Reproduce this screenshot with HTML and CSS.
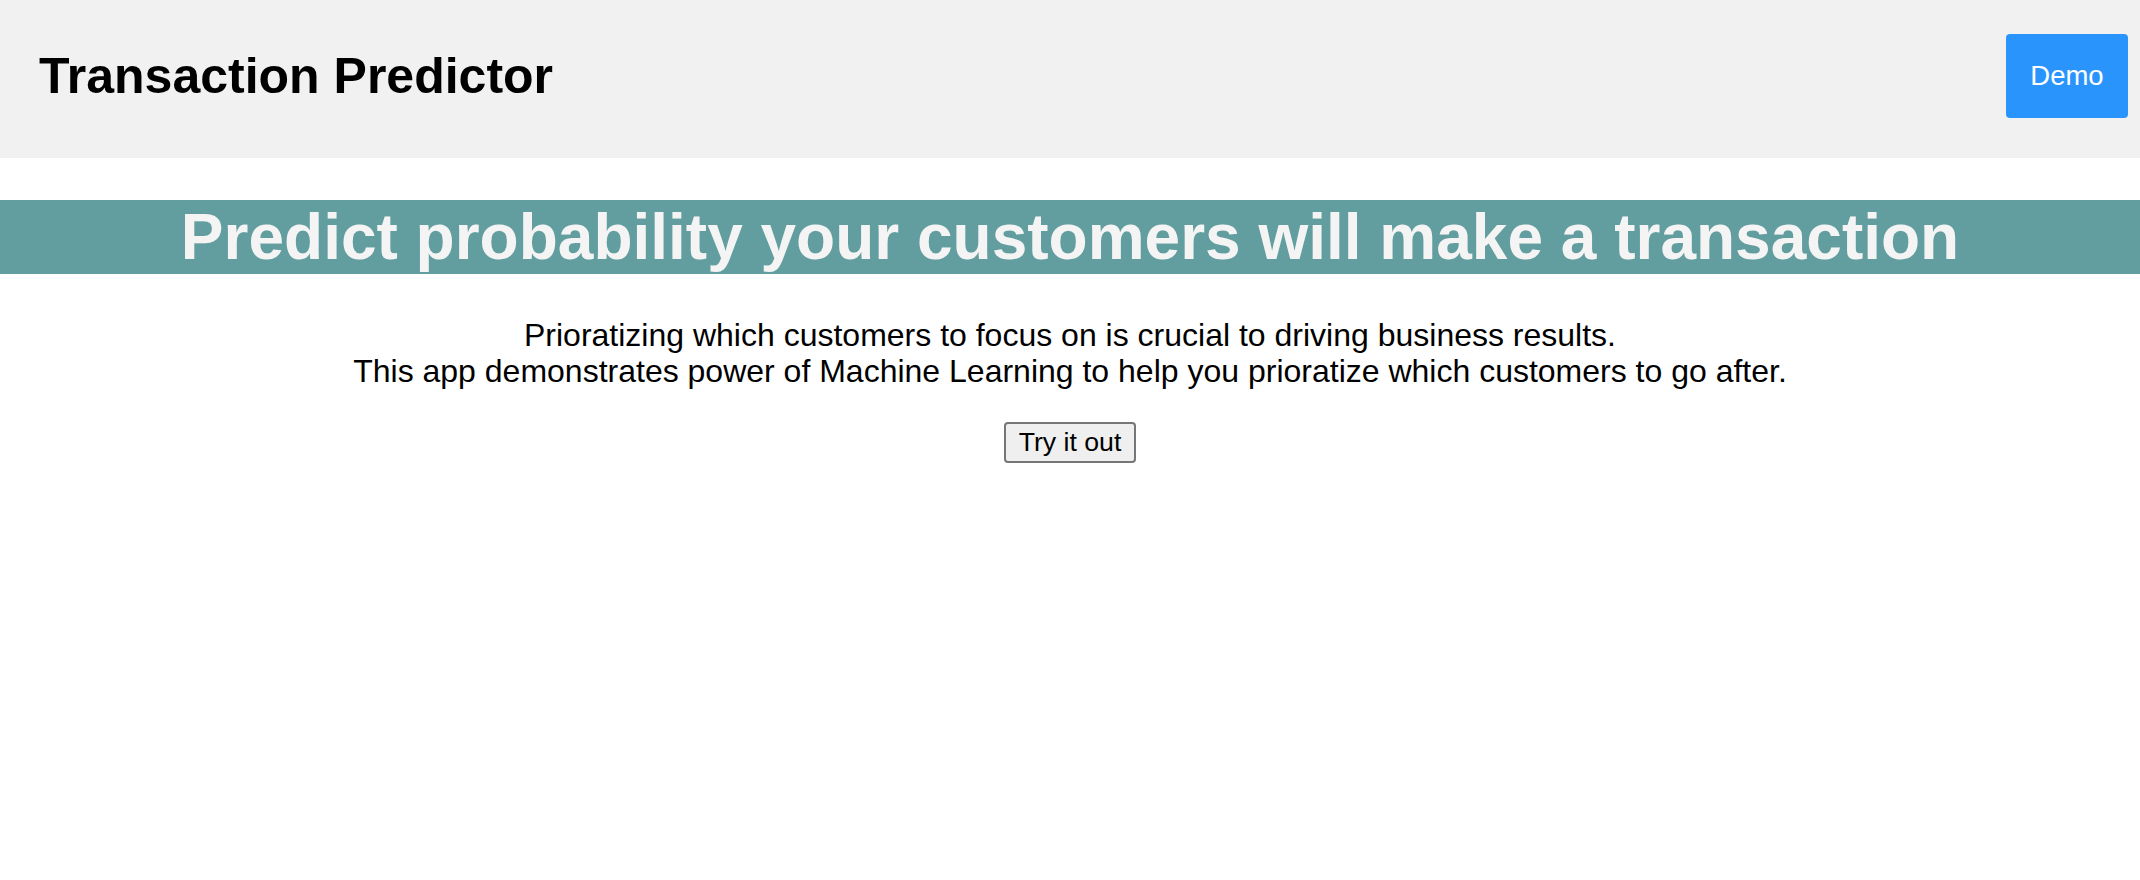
FILE: index.html
```html
<!DOCTYPE html>
<html lang="en">
<head>
<meta charset="utf-8">
<title>Transaction Predictor</title>
<link rel="stylesheet" href="styles.css">
</head>
<body>
<header class="topbar">
  <h1 class="brand">Transaction Predictor</h1>
  <button class="demo-btn" type="button">Demo</button>
</header>
<main class="content">
  <h2 class="hero">Predict probability your customers will make a transaction</h2>
  <p class="intro">Prioratizing which customers to focus on is crucial to driving business results.<br>This app demonstrates power of Machine Learning to help you prioratize which customers to go after.</p>
  <div class="actions">
    <button class="try-btn" type="button">Try it out</button>
  </div>
</main>
</body>
</html>
```
FILE: styles.css
```css
html, body {
  margin: 0;
  padding: 0;
  background: #ffffff;
  font-family: "Liberation Sans", Arial, sans-serif;
  color: #000000;
}

.topbar {
  display: flex;
  justify-content: space-between;
  align-items: center;
  box-sizing: border-box;
  height: 158px;
  padding: 0 12px 6px 39px;
  background: #f1f1f1;
}

.brand {
  margin: 0;
  font-size: 50px;
  font-weight: bold;
  line-height: 1;
}

.demo-btn {
  box-sizing: border-box;
  width: 122px;
  height: 84px;
  padding: 0;
  border: none;
  border-radius: 4px;
  background: #2a94fd;
  color: #ffffff;
  font-family: "Liberation Sans", Arial, sans-serif;
  font-size: 27.5px;
}

.content {
  display: flex;
  flex-direction: column;
  align-items: stretch;
}

.hero {
  margin: 42px 0 0 0;
  background: #629e9f;
  color: #f4f4f4;
  font-size: 64px;
  font-weight: bold;
  text-align: center;
  line-height: normal;
}

.intro {
  margin: 43px 0 0 0;
  font-size: 32px;
  line-height: 36px;
  text-align: center;
}

.actions {
  display: flex;
  justify-content: center;
  margin-top: 33px;
}

.try-btn {
  padding: 3px 13px;
  border: 2px solid #767676;
  border-radius: 4px;
  background: #efefef;
  color: #000000;
  font-family: "Liberation Sans", Arial, sans-serif;
  font-size: 26.67px;
  line-height: normal;
}
```
